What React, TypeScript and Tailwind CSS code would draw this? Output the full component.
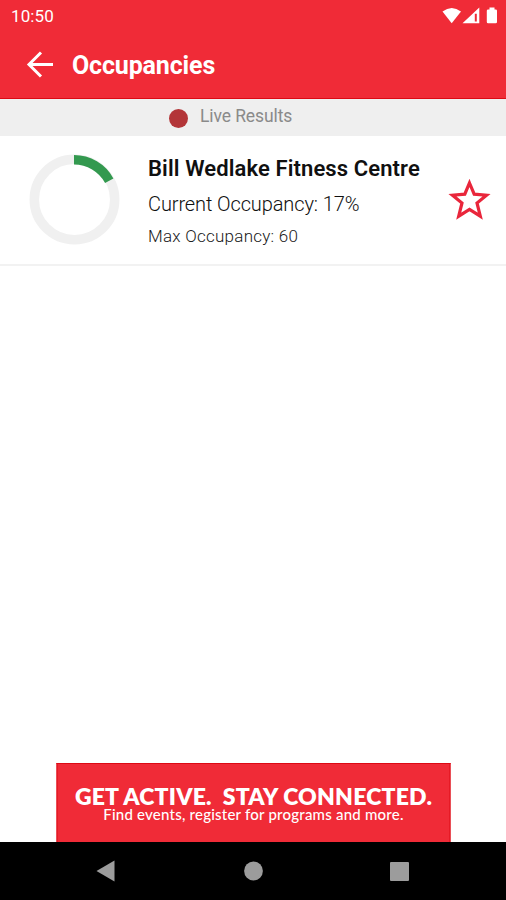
type Facility = {
  name: string;
  percent: number;
  max: number;
};

const facilities: Facility[] = [{ name: "Bill Wedlake Fitness Centre", percent: 17, max: 60 }];

export default function App() {
  return (
    <div className="flex h-[900px] w-[506px] flex-col overflow-hidden bg-white font-['Roboto','Liberation_Sans',sans-serif]">
      <header className="h-[99px] shrink-0 border-b border-[#dc0a14] bg-[#f02b37] text-white">
        <StatusBar />
        <div className="flex h-[66px] items-center pl-[26px]">
          <button type="button" aria-label="Back">
            <svg width="28" height="28" viewBox="0 0 28 28" fill="none" stroke="currentColor" strokeWidth="3" className="block">
              <path d="M27 13.5H3M15 1.5L3 13.5l12 12" />
            </svg>
          </button>
          <h1 className="mt-[2px] ml-[18px] text-[25px] leading-8 font-bold tracking-[-0.15px]">Occupancies</h1>
        </div>
      </header>

      <div className="flex h-[37px] shrink-0 items-start bg-[#efefef] pl-[169px]">
        <span className="mt-[10px] size-[19px] rounded-full bg-[#b33538]" />
        <span className="ml-3 pt-[5px] text-[17.5px] leading-6 tracking-[-0.1px] text-[#8a8a8a]">Live Results</span>
      </div>

      <main className="flex-1">
        {facilities.map((f) => (
          <FacilityRow key={f.name} facility={f} />
        ))}
      </main>

      <div className="mx-auto flex h-[79px] w-[394px] shrink-0 translate-x-[0.5px] flex-col items-center border border-b-0 border-[#dc0a14] bg-[#f02b37] pt-[23px] font-['Lato','Liberation_Sans',sans-serif] whitespace-pre text-white">
        <p className="text-[23px] leading-[18px] font-extrabold tracking-[0.2px]">{"GET ACTIVE.  STAY CONNECTED."}</p>
        <p className="text-[15px] leading-[18px] font-medium tracking-[0.22px]">Find events, register for programs and more.</p>
      </div>

      <NavBar />
    </div>
  );
}

function StatusBar() {
  return (
    <div className="flex h-8 items-center justify-between pr-2 pl-[11px]">
      <span className="text-[17px] leading-5 tracking-[0.1px]">10:50</span>
      <svg width="56" height="18" viewBox="0 0 56 18" fill="currentColor" aria-hidden>
        <path d="M0.5 4.5Q9.7 -2.5 19 4.5L9.7 16.3Z" />
        <path fillRule="evenodd" d="M37.3 0.5V16.3H20.5ZM32.8 6.8V14.4H34.8V6.8Z" />
        <path d="M47.5 0.5h5v2h1.2q1.3 0 1.3 1.3v11.2q0 1.3-1.3 1.3h-7.6q-1.3 0-1.3-1.3V3.8q0-1.3 1.3-1.3h1.4z" />
      </svg>
    </div>
  );
}

function FacilityRow({ facility }: { facility: Facility }) {
  return (
    <div className="flex h-[130px] border-b-2 border-[#f2f2f2] text-[#101010]">
      <div className="w-[148px] shrink-0 pt-[18px] pl-[29px]">
        <OccupancyRing percent={facility.percent} />
      </div>
      <div className="flex-1 whitespace-nowrap">
        <h2 className="mt-[19px] text-[22px] leading-7 font-semibold tracking-[0.11px]">{facility.name}</h2>
        <p className="mt-[9px] text-[20px] leading-6 font-[350] tracking-[-0.11px]">Current Occupancy: {facility.percent}%</p>
        <p className="mt-[10px] text-[17px] leading-5 font-[350] tracking-[0.25px] text-[#202020]">Max Occupancy: {facility.max}</p>
      </div>
      <button type="button" aria-label="Favourite" className="mt-[41px] mr-[14px] self-start">
        <svg width="45" height="44" viewBox="0 0 45 44" fill="none" stroke="#e9263b" strokeWidth="3.2" className="block">
          <path d="M22.5 6L27.2 17.2L39.5 18.2L30 26L33.3 39.2L22.5 32.4L11.7 39.2L15 26L5.5 18.2L17.8 17.2Z" />
        </svg>
      </button>
    </div>
  );
}

function OccupancyRing({ percent }: { percent: number }) {
  return (
    <svg width="91" height="91" viewBox="0 0 91 91" fill="none" strokeWidth="9.5" className="block">
      <circle cx="45.5" cy="45.5" r="40.2" stroke="#f0f0f0" />
      <circle cx="45" cy="46" r="40.2" stroke="#33994f" pathLength="100" strokeDasharray={`${percent} 100`} transform="rotate(-90 45 46)" />
    </svg>
  );
}

function NavBar() {
  return (
    <nav className="h-[58px] shrink-0 bg-black text-[#9c9c9c]">
      <svg width="506" height="58" viewBox="0 0 506 58" fill="currentColor" className="block">
        <path d="M96.5 29L114.5 18.5V39.5Z" />
        <circle cx="253.5" cy="29" r="9.4" />
        <rect x="390" y="20" width="19" height="19" rx="1" />
      </svg>
    </nav>
  );
}
